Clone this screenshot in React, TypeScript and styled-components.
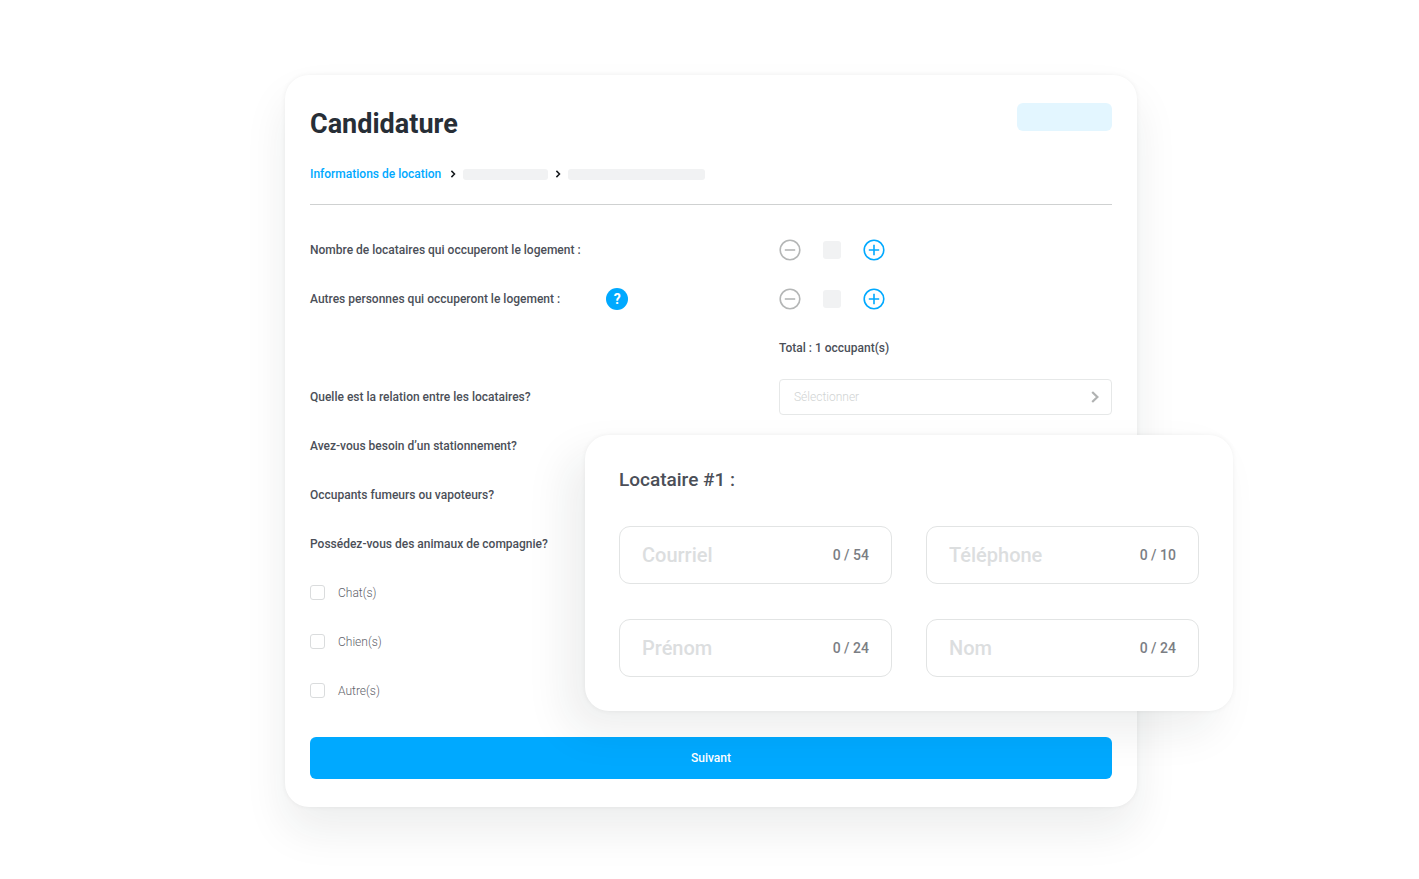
import React from 'react';
import styled, { createGlobalStyle } from 'styled-components';

const GlobalStyle = createGlobalStyle`
  *, *::before, *::after { box-sizing: border-box; }
  body {
    margin: 0;
    background: #fff;
    color: #4b4f58;
    font-family: Roboto, "Liberation Sans", sans-serif;
    font-size: 12px;
    font-weight: 500;
    line-height: 16px;
  }
  button, input, select { font: inherit; }
`;

const Page = styled.main`
  padding: 75px 20px 72px 23px;
`;

const Stage = styled.div`
  position: relative;
  max-width: 852px;
  margin: 0 auto;
`;

const Card = styled.form`
  padding: 28px 25px;
  border-radius: 24px;
  background: #fff;
  box-shadow: 0 24px 44px rgba(20, 36, 32, 0.08), 0 0 5px rgba(20, 36, 32, 0.06);
`;

const Header = styled.header`
  display: flex;
  justify-content: space-between;
  align-items: flex-start;
`;

const Title = styled.h1`
  margin: 0;
  color: #272e36;
  font-size: 27px;
  font-weight: 700;
  line-height: 42px;
`;

const Tag = styled.span`
  width: 95px;
  height: 28px;
  border-radius: 6px;
  background: #e3f6ff;
`;

const Steps = styled.nav`
  display: flex;
  align-items: center;
  gap: 6px;
  padding: 21px 0 22px;
  border-bottom: 1px solid #cfd1d1;
`;

const StepLink = styled.a`
  margin-right: 2px;
  color: #00a9ff;
  text-decoration: none;
`;

const StepBar = styled.span<{ $width: number }>`
  width: ${(p) => p.$width}px;
  height: 11px;
  border-radius: 3px;
  background: #f1f2f3;
`;

const Rows = styled.div`
  padding: 20px 0 22px;
`;

const Row = styled.div`
  display: grid;
  grid-template-columns: minmax(0, 1fr) 333px;
  align-items: center;
  height: 49px;
`;

const Question = styled.div`
  display: flex;
  align-items: center;
  gap: 46px;
`;

const Answer = styled.div`
  grid-column: 2;
`;

const HelpButton = styled.button`
  width: 22px;
  height: 22px;
  padding: 0;
  border: 0;
  border-radius: 50%;
  background: #00a9ff;
  color: #fff;
  font-size: 14px;
  font-weight: 700;
  line-height: 22px;
`;

const StepperBox = styled.div`
  display: flex;
  align-items: center;
  gap: 22px;
`;

const RoundButton = styled.button<{ $muted?: boolean }>`
  display: block;
  width: 22px;
  height: 22px;
  padding: 0;
  border: 0;
  background: none;
  color: ${(p) => (p.$muted ? '#b4b6b6' : '#00a9ff')};
  svg { display: block; }
`;

const Count = styled.span`
  width: 18px;
  height: 18px;
  border-radius: 3px;
  background: #f1f2f3;
`;

const SelectBox = styled.div`
  display: grid;
  align-items: center;
  > * { grid-area: 1 / 1; }
  > svg {
    justify-self: end;
    margin-right: 12px;
    pointer-events: none;
  }
`;

const Select = styled.select`
  appearance: none;
  width: 100%;
  height: 36px;
  padding: 0 14px;
  border: 1px solid #e6e8e8;
  border-radius: 4px;
  background: #fff;
  color: #d0d3d3;
  font-weight: 300;
`;

const CheckLabel = styled.label`
  display: flex;
  align-items: center;
  gap: 13px;
  color: #5f636b;
  font-weight: 300;
`;

const Checkbox = styled.input`
  appearance: none;
  width: 15px;
  height: 15px;
  margin: 0;
  border: 1px solid #dadcdd;
  border-radius: 3px;
  background: #fff;
  &:checked { background: #00a9ff; }
`;

const Submit = styled.button`
  display: block;
  width: 100%;
  height: 42px;
  border: 0;
  border-radius: 6px;
  background: #00a9ff;
  color: #fff;
`;

const TenantCard = styled.section`
  position: absolute;
  top: 360px;
  right: -96px;
  width: 648px;
  padding: 34px;
  border-radius: 24px;
  background: #fff;
  box-shadow: -18px 20px 44px rgba(20, 36, 32, 0.08), 0 0 5px rgba(20, 36, 32, 0.06);
`;

const TenantTitle = styled.h2`
  margin: 0 0 35px;
  font-size: 19px;
  font-weight: 500;
  line-height: 22px;
`;

const Fields = styled.div`
  display: grid;
  grid-template-columns: repeat(2, minmax(0, 1fr));
  gap: 35px 34px;
`;

const Field = styled.label`
  display: flex;
  align-items: center;
  gap: 12px;
  height: 58px;
  padding: 0 22px;
  border: 1px solid #e2e4e4;
  border-radius: 11px;
  color: #7b7e84;
  font-size: 14px;
`;

const FieldInput = styled.input`
  flex: 1;
  min-width: 0;
  padding: 0;
  border: 0;
  outline: 0;
  background: none;
  color: #4b4f58;
  font-size: 20px;
  line-height: 24px;
  &::placeholder { color: #dcdedf; opacity: 1; }
`;

const StepChevron = () => (
  <svg width="8" height="10" viewBox="0 0 8 10" fill="none" stroke="#14181c" strokeWidth="1.5" aria-hidden="true">
    <path d="M2.4 1.9 5.5 5 2.4 8.1" />
  </svg>
);

const CircleIcon = ({ plus }: { plus?: boolean }) => (
  <svg width="22" height="22" viewBox="0 0 22 22" fill="none" stroke="currentColor" strokeWidth="1.6" aria-hidden="true">
    <circle cx="11" cy="11" r="9.8" />
    <path d={plus ? 'M5.8 11h10.4M11 5.8v10.4' : 'M5.8 11h10.4'} />
  </svg>
);

const Stepper = ({ name }: { name: string }) => (
  <StepperBox role="group" aria-label={name}>
    <RoundButton type="button" aria-label="Retirer" $muted>
      <CircleIcon />
    </RoundButton>
    <Count />
    <RoundButton type="button" aria-label="Ajouter">
      <CircleIcon plus />
    </RoundButton>
  </StepperBox>
);

const fields = [
  { label: 'Courriel', max: 54 },
  { label: 'Téléphone', max: 10 },
  { label: 'Prénom', max: 24 },
  { label: 'Nom', max: 24 },
];

export default function App() {
  return (
    <>
      <GlobalStyle />
      <Page>
        <Stage>
          <Card onSubmit={(e) => e.preventDefault()}>
            <Header>
              <Title>Candidature</Title>
              <Tag />
            </Header>
            <Steps>
              <StepLink href="#location">Informations de location</StepLink>
              <StepChevron />
              <StepBar $width={85} />
              <StepChevron />
              <StepBar $width={137} />
            </Steps>
            <Rows>
              <Row>
                <Question>Nombre de locataires qui occuperont le logement :</Question>
                <Stepper name="Locataires" />
              </Row>
              <Row>
                <Question>
                  Autres personnes qui occuperont le logement :
                  <HelpButton type="button">?</HelpButton>
                </Question>
                <Stepper name="Autres personnes" />
              </Row>
              <Row>
                <Answer>Total : 1 occupant(s)</Answer>
              </Row>
              <Row>
                <label htmlFor="relation">Quelle est la relation entre les locataires?</label>
                <SelectBox>
                  <Select id="relation">
                    <option>Sélectionner</option>
                  </Select>
                  <svg width="10" height="14" viewBox="0 0 10 14" fill="none" stroke="#b0b2b2" strokeWidth="2.2" aria-hidden="true">
                    <path d="M2.2 2 7.4 7 2.2 12" />
                  </svg>
                </SelectBox>
              </Row>
              <Row>
                <Question>Avez-vous besoin d’un stationnement?</Question>
              </Row>
              <Row>
                <Question>Occupants fumeurs ou vapoteurs?</Question>
              </Row>
              <Row>
                <Question>Possédez-vous des animaux de compagnie?</Question>
              </Row>
              {['Chat(s)', 'Chien(s)', 'Autre(s)'].map((pet) => (
                <Row key={pet}>
                  <CheckLabel>
                    <Checkbox type="checkbox" />
                    {pet}
                  </CheckLabel>
                </Row>
              ))}
            </Rows>
            <Submit type="submit">Suivant</Submit>
          </Card>
          <TenantCard>
            <TenantTitle>Locataire #1 :</TenantTitle>
            <Fields>
              {fields.map(({ label, max }) => (
                <Field key={label}>
                  <FieldInput placeholder={label} maxLength={max} aria-label={label} />
                  <span>0 / {max}</span>
                </Field>
              ))}
            </Fields>
          </TenantCard>
        </Stage>
      </Page>
    </>
  );
}
